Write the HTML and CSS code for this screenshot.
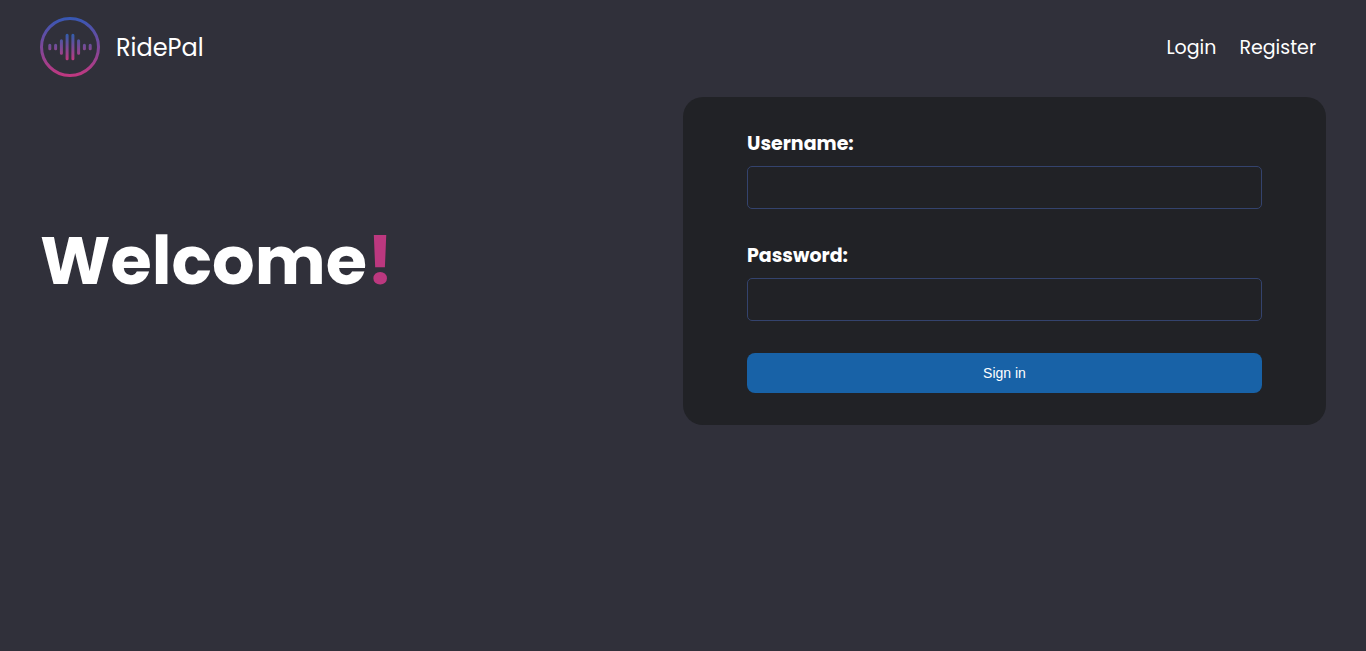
FILE: index.html
```html
<!DOCTYPE html>
<html lang="en">
<head>
<meta charset="utf-8">
<meta name="viewport" content="width=device-width, initial-scale=1">
<title>RidePal</title>
<link rel="stylesheet" href="styles.css">
</head>
<body>
<header class="header">
  <a class="brand" href="#">
    <svg class="logo" viewBox="0 0 60 60" fill="none" stroke-linecap="round" aria-hidden="true">
      <defs>
        <linearGradient id="ring" gradientUnits="userSpaceOnUse" x1="30" y1="0" x2="30" y2="60">
          <stop offset="0" stop-color="#3558b4"/>
          <stop offset="1" stop-color="#c3377f"/>
        </linearGradient>
        <linearGradient id="wave" gradientUnits="userSpaceOnUse" x1="30" y1="16" x2="30" y2="44">
          <stop offset="0" stop-color="#2b5fae"/>
          <stop offset="1" stop-color="#c3377f"/>
        </linearGradient>
      </defs>
      <circle cx="30" cy="30" r="28.5" stroke="url(#ring)" stroke-width="3"/>
      <path d="M9.8 28.2v3.6M15.6 28.2v3.6M21.4 23.7v12.6M27.1 18.2v23.6M32.9 18.2v23.6M38.6 23.7v12.6M44.4 28.2v3.6M50.2 28.2v3.6" stroke="url(#wave)" stroke-width="3"/>
    </svg>
    <span class="brand-name">RidePal</span>
  </a>
  <nav class="nav">
    <a class="nav-link" href="#">Login</a>
    <a class="nav-link" href="#">Register</a>
  </nav>
</header>
<main class="main">
  <h1 class="title">Welcome<span class="accent">!</span></h1>
  <form class="form">
    <div class="field">
      <label class="label" for="username">Username:</label>
      <input class="input" id="username" type="text">
    </div>
    <div class="field">
      <label class="label" for="password">Password:</label>
      <input class="input" id="password" type="password">
    </div>
    <button class="button" type="submit">Sign in</button>
  </form>
</main>
</body>
</html>
```
FILE: styles.css
```css
* {
  box-sizing: border-box;
}

body {
  margin: 0;
  min-height: 100vh;
  background: #30303a;
  color: #fff;
  font-family: Poppins, Inter, sans-serif;
}

.header {
  display: flex;
  align-items: center;
  justify-content: space-between;
  padding: 17px 50px 20px 40px;
}

.brand {
  display: flex;
  align-items: center;
  gap: 16px;
  color: inherit;
  text-decoration: none;
}

.logo {
  width: 60px;
  height: 60px;
}

.brand-name {
  font-size: 24px;
  line-height: 37px;
}

.nav {
  display: flex;
  gap: 23px;
}

.nav-link {
  color: inherit;
  font-size: 19px;
  line-height: 31px;
  text-decoration: none;
}

.main {
  display: grid;
  grid-template-columns: 1fr 1fr;
  align-items: center;
  padding: 0 40px;
}

.title {
  margin: 0;
  font-size: 67px;
  font-weight: 700;
  line-height: 96px;
}

.accent {
  color: #bc387f;
}

.form {
  display: flex;
  flex-direction: column;
  gap: 32px;
  padding: 32px 64px;
  border-radius: 20px;
  background: #212226;
}

.field {
  display: flex;
  flex-direction: column;
  gap: 7px;
}

.label {
  font-size: 19px;
  font-weight: 700;
  line-height: 30px;
}

.input {
  width: 100%;
  height: 43px;
  padding: 0 12px;
  border: 1px solid #34436d;
  border-radius: 5px;
  background: transparent;
  color: inherit;
  font: inherit;
}

.button {
  height: 40px;
  border: 0;
  border-radius: 8px;
  background: #1862a7;
  color: #fff;
  font-family: "Liberation Sans", Arial, sans-serif;
  font-size: 14px;
}
```
